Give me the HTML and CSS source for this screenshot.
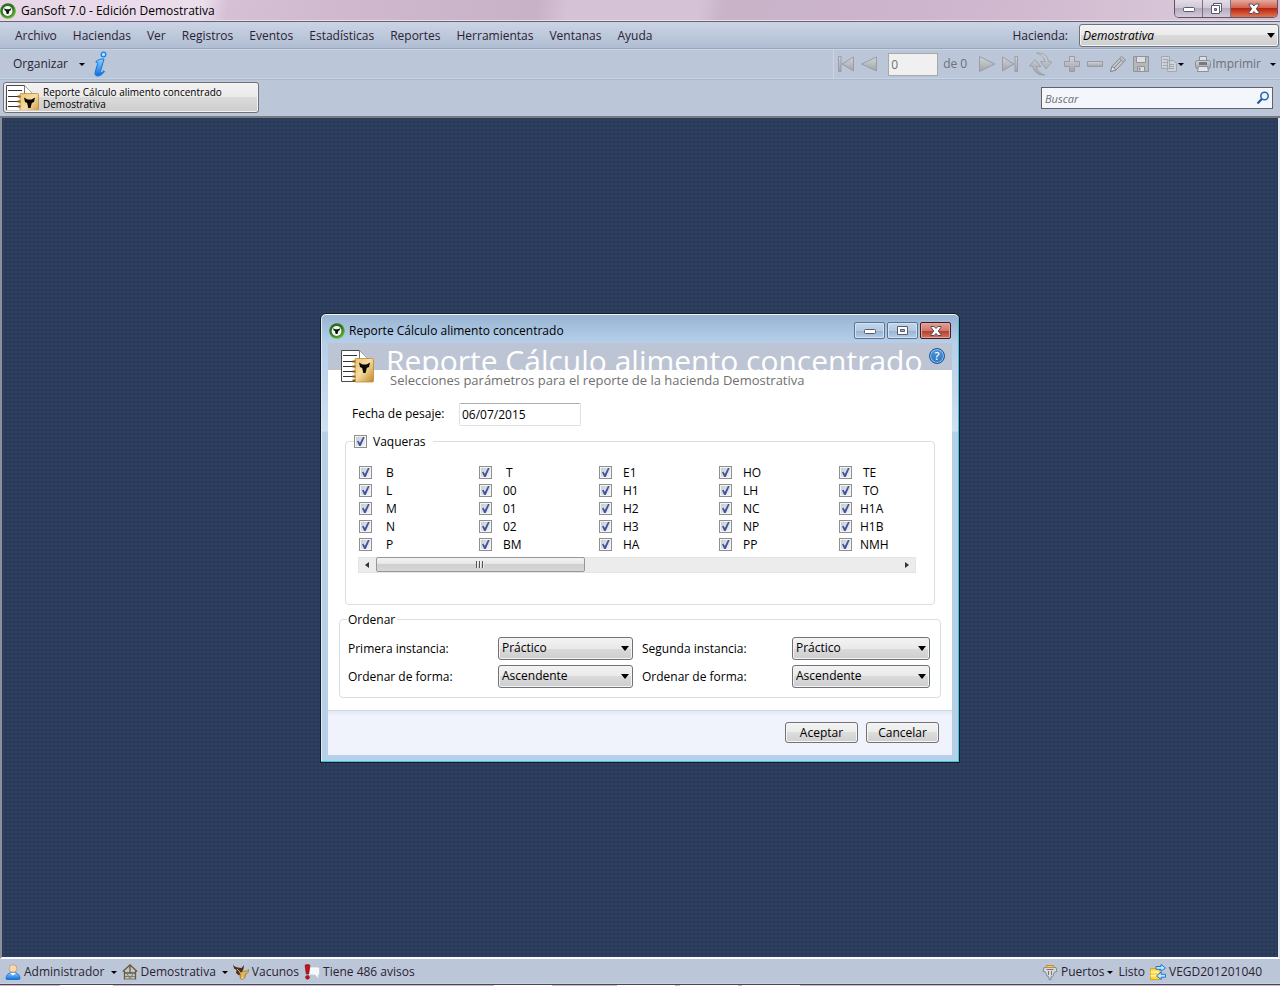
FILE: index.html
```html
<!DOCTYPE html>
<html lang="es">
<head>
<meta charset="utf-8">
<title>GanSoft 7.0 - Edición Demostrativa</title>
<link rel="stylesheet" href="styles.css">
</head>
<body>
<svg class="defs" aria-hidden="true">
  <defs>
    <linearGradient id="silver" x1="0" y1="0" x2="0" y2="1"><stop offset="0" stop-color="#d2d4d8"/><stop offset="1" stop-color="#a0a4aa"/></linearGradient>
    <linearGradient id="gold" x1="0" y1="0" x2="1" y2="1"><stop offset="0" stop-color="#e9c27a"/><stop offset=".45" stop-color="#f6dda2"/><stop offset="1" stop-color="#c1872b"/></linearGradient>
    <linearGradient id="blue" x1="0" y1="0" x2="0" y2="1"><stop offset="0" stop-color="#8fd0ff"/><stop offset="1" stop-color="#0b6be0"/></linearGradient>
    <radialGradient id="green" cx=".4" cy=".35" r=".7"><stop offset="0" stop-color="#2f5a28"/><stop offset=".6" stop-color="#2e7a1f"/><stop offset="1" stop-color="#7ec43f"/></radialGradient>
  </defs>
  <symbol id="logo" viewBox="0 0 16 16">
    <circle cx="8" cy="8" r="7.8" fill="url(#green)"/>
    <circle cx="7.600" cy="8" r="4.900" fill="#f4f7f2"/>
    <path d="M4 5.200 6.200 6.200h2.800L11.300 5.200 10.700 7.200 9.300 7.900 8.500 10.900H6.700L5.900 7.900 4.600 7.200Z" fill="#0c140a"/>
  </symbol>
  <symbol id="report" viewBox="0 0 33 33">
    <path d="M.5.5H18.500L27.500 9.500V31.500H.5Z" fill="#fff" stroke="#4a4a4a"/>
    <path d="M18.500.5V9.500H27.500" fill="#fff" stroke="#777"/>
    <path d="M2 5.500H16M2 11.500H12M2 16.500H12M2 21.500H12M2 26.500H12" stroke="#333"/>
    <rect x="14" y="8.500" width="18.500" height="23.500" rx="1" fill="url(#gold)" stroke="#c08d34" stroke-width=".8"/>
    <path d="M11.500 11.500h3M11.500 16.500h3M11.500 21.500h3M11.500 26.500h3M11.500 30.500h3" stroke="#8c5c10" stroke-width="2"/>
    <path d="M18 12.500 21.500 14.500h4l3.500-2-1 4.500-2.200 1-1.300 5h-2.200l-1.200-5L19 17Z" fill="#0b0803"/>
  </symbol>
</svg>

<header class="titlebar">
  <svg class="i16"><use href="#logo"/></svg>
  <h1 class="titlebar-text">GanSoft 7.0 - Edición Demostrativa</h1>
  <div class="caption">
    <button class="cap" aria-label="Minimizar"><svg width="14" height="8" viewBox="0 0 14 8"><rect x="1.500" y="2.500" width="11" height="4" rx="1" fill="#fff" stroke="#555b70"/></svg></button>
    <button class="cap" aria-label="Restaurar"><svg width="13" height="12" viewBox="0 0 13 12"><path d="M3.500.500h8v8h-8Z" fill="#fff" stroke="#555b70"/><path d="M1.500 2.500h8v8h-8Z" fill="#fff" stroke="#555b70"/><path d="M4.500 5.500h2v2h-2Z" fill="#aaa4b8" stroke="#555b70"/></svg></button>
    <button class="cap cap-close" aria-label="Cerrar"><svg width="14" height="12" viewBox="0 0 14 12"><path d="M2 1h3.300L7 3 8.700 1H12v1L9.300 5.800 12 9.500v1H8.700L7 8.500l-1.700 2H2v-1l2.700-3.700L2 2Z" fill="#fff" stroke="#5b4a55"/></svg></button>
  </div>
</header>

<nav class="menubar">
  <button>Archivo</button><button>Haciendas</button><button>Ver</button><button>Registros</button><button>Eventos</button><button>Estadísticas</button><button>Reportes</button><button>Herramientas</button><button>Ventanas</button><button>Ayuda</button>
  <label class="farm-label" for="farm">Hacienda:</label>
  <span class="select farm"><select id="farm"><option>Demostrativa</option></select></span>
</nav>

<div class="toolbar">
  <button class="organize">Organizar <span class="arrow"></span></button>
  <button class="info" aria-label="Información"><svg width="16" height="26" viewBox="0 0 16 26"><circle cx="10.500" cy="3.500" r="2.300" fill="#b5e2ff" stroke="#1480e8" stroke-width="1.300"/><path d="M3 10.500C5 8.500 8 7.800 11 8L7.500 20.500c-.5 1.800 1 1.500 3.300-.7l.7.700C9 24 6.500 25 4.500 25c-2 0-3-1.500-2.300-4l2.500-8.500c.4-1.500-.5-1.500-1.700-1Z" fill="url(#blue)" stroke="#1677dc"/></svg></button>
  <div class="tools">
    <button aria-label="Primero"><svg class="i18" viewBox="0 0 18 18"><path d="M1.500 1.500h2.500v15H1.500ZM16.500 2v14L5 9Z" fill="url(#silver)" stroke="#999da3"/></svg></button>
    <button aria-label="Anterior"><svg class="i18" viewBox="0 0 18 18"><path d="M16.500 2v14L1.500 9Z" fill="url(#silver)" stroke="#999da3"/></svg></button>
    <input class="page" aria-label="Registro" value="0">
    <span class="of">de 0</span>
    <button aria-label="Siguiente"><svg class="i18" viewBox="0 0 18 18"><path d="M1.500 1.500v15L17 9Z" fill="url(#silver)" stroke="#999da3"/></svg></button>
    <button aria-label="Último"><svg class="i18" viewBox="0 0 18 18"><path d="M16.500 1.500H14v15h2.500ZM1.500 2v14L13 9Z" fill="url(#silver)" stroke="#999da3"/></svg></button>
    <button class="split" aria-label="Actualizar"><svg width="24" height="24" viewBox="0 0 24 24"><path d="M7.500 1C14 .5 19 4 19.500 9.500L23 10 17 17 11.500 9.500 16 9.500C15.500 5.500 12.500 2.500 7.500 1ZM16 23C9.500 23.500 4.500 20 4 14.500L.5 14 6 7.500 12 14.500H7.500C8 18.500 11 21.500 16 23Z" fill="url(#silver)" stroke="#989ca2" stroke-width=".8"/></svg></button>
    <button class="split" aria-label="Agregar"><svg class="i18" viewBox="0 0 18 18"><path d="M6.500 1.500h5v5h5v5h-5v5h-5v-5h-5v-5h5Z" fill="url(#silver)" stroke="#999da3"/></svg></button>
    <button aria-label="Eliminar"><svg class="i18" viewBox="0 0 18 18"><rect x="1.500" y="6.500" width="15" height="5" fill="url(#silver)" stroke="#999da3"/></svg></button>
    <button aria-label="Editar"><svg class="i18" viewBox="0 0 18 18"><path d="M1.500 16.500 3 11.500 12.500 1.500 16.500 5 7 15Z" fill="#c4c7cc" stroke="#85898f"/><path d="M3 11.500 7 15 1.500 16.500Z" fill="#e2e4e7" stroke="#85898f"/><path d="M10.500 3.500l4 3.500M5 13l8-8.500" stroke="#85898f"/></svg></button>
    <button aria-label="Guardar"><svg class="i18" viewBox="0 0 18 18"><path d="M1.500 1.500h15v15h-15Z" fill="#b4b7bc" stroke="#909499"/><path d="M4.500 1.500h9v6h-9ZM5.500 11.500h7v5h-7Z" fill="#dcdee1" stroke="#909499"/><path d="M6.500 12.500h2v3h-2Z" fill="#909499"/></svg></button>
    <button class="split" aria-label="Copiar"><svg class="i18" viewBox="0 0 18 18"><path d="M1.500 1.500h8v12h-8ZM7.500 5.500h6l3 3v8h-9Z" fill="#ccd2da" stroke="#a3a8b0"/><path d="M3 4.500h5M3 7.500h4M3 10.500h4M9 9.500h5M9 11.500h5M9 13.500h5" stroke="#a3a8b0"/></svg><span class="arrow"></span></button>
    <button class="split print"><svg class="i18" viewBox="0 0 18 18"><path d="M5.500 1.500h7V6h-7Z" fill="#dde0e4" stroke="#8c9096"/><rect x="1.500" y="5.500" width="15" height="8" rx="2" fill="url(#silver)" stroke="#8c9096"/><path d="M5 7h8v3H5Z" fill="#777b81"/><path d="M4.500 11.500h9l1 5h-11Z" fill="#e3e5e8" stroke="#8c9096"/></svg>Imprimir</button>
    <button aria-label="Opciones de impresión"><span class="arrow"></span></button>
  </div>
</div>

<div class="tabrow">
  <button class="doc-tab"><svg class="tab-icon" viewBox="0 0 33 25"><use href="#report" width="33" height="33"/></svg><span>Reporte Cálculo alimento concentrado<br>Demostrativa</span></button>
  <div class="search"><input aria-label="Buscar" placeholder="Buscar"><svg width="14" height="14" viewBox="0 0 14 14"><circle cx="8.500" cy="5" r="3.700" fill="#edf7ff" stroke="#2d68b4" stroke-width="1.600"/><path d="M5.800 8 1.500 12.500" stroke="#2456a0" stroke-width="2.200"/></svg></div>
</div>

<main class="workspace">
  <section class="dialog" aria-labelledby="dlg-title">
    <div class="dlg-title">
      <svg class="i16"><use href="#logo"/></svg>
      <h2 id="dlg-title">Reporte Cálculo alimento concentrado</h2>
      <button class="win" aria-label="Minimizar"><svg width="12" height="6" viewBox="0 0 12 6"><rect x=".5" y="1.500" width="11" height="4" rx="1" fill="#fff" stroke="#555b70"/></svg></button>
      <button class="win" aria-label="Maximizar"><svg width="11" height="9" viewBox="0 0 11 9"><path d="M.5.5h10v8H.5Z" fill="#fff" stroke="#555b70"/><path d="M3.500 3.500h4v2h-4Z" fill="#9fb7d3" stroke="#555b70"/></svg></button>
      <button class="win win-close" aria-label="Cerrar"><svg width="12" height="10" viewBox="0 0 12 10"><path d="M1 .5h3L6 2.500 8 .5h3v.8L8.300 5 11 8.700v.8H8L6 7.500l-2 2H1v-.8L3.700 5 1 1.300Z" fill="#fff" stroke="#5c4650"/></svg></button>
    </div>
    <div class="dlg-body">
      <div class="dlg-head">
        <svg class="head-icon"><use href="#report"/></svg>
        <div class="head-text"><p class="head-title">Reporte Cálculo alimento concentrado</p><p class="head-sub">Selecciones parámetros para el reporte de la hacienda Demostrativa</p></div>
        <button class="help" aria-label="Ayuda">?</button>
      </div>
      <div class="date-row"><label for="date">Fecha de pesaje:</label><input id="date" value="06/07/2015"></div>
      <fieldset class="group herds">
        <legend><label><input type="checkbox" checked>Vaqueras</label></legend>
        <div class="herd-list">
          <label class="c1"><input type="checkbox" checked>B</label><label class="c1"><input type="checkbox" checked>L</label><label class="c1"><input type="checkbox" checked>M</label><label class="c1"><input type="checkbox" checked>N</label><label class="c1"><input type="checkbox" checked>P</label>
          <label class="c1"><input type="checkbox" checked>T</label><label class="c2"><input type="checkbox" checked>00</label><label class="c2"><input type="checkbox" checked>01</label><label class="c2"><input type="checkbox" checked>02</label><label class="c2"><input type="checkbox" checked>BM</label>
          <label class="c2"><input type="checkbox" checked>E1</label><label class="c2"><input type="checkbox" checked>H1</label><label class="c2"><input type="checkbox" checked>H2</label><label class="c2"><input type="checkbox" checked>H3</label><label class="c2"><input type="checkbox" checked>HA</label>
          <label class="c2"><input type="checkbox" checked>HO</label><label class="c2"><input type="checkbox" checked>LH</label><label class="c2"><input type="checkbox" checked>NC</label><label class="c2"><input type="checkbox" checked>NP</label><label class="c2"><input type="checkbox" checked>PP</label>
          <label class="c2"><input type="checkbox" checked>TE</label><label class="c2"><input type="checkbox" checked>TO</label><label class="c3"><input type="checkbox" checked>H1A</label><label class="c3"><input type="checkbox" checked>H1B</label><label class="c3"><input type="checkbox" checked>NMH</label>
        </div>
        <div class="scroll">
          <button aria-label="Desplazar a la izquierda"><span class="tri-left"></span></button>
          <div class="track"><div class="thumb"><i></i><i></i><i></i></div></div>
          <button aria-label="Desplazar a la derecha"><span class="tri-right"></span></button>
        </div>
      </fieldset>
      <fieldset class="group order">
        <legend>Ordenar</legend>
        <div class="order-grid">
          <label for="o1">Primera instancia:</label><span class="select"><select id="o1"><option>Práctico</option></select></span>
          <label for="o2">Segunda instancia:</label><span class="select"><select id="o2"><option>Práctico</option></select></span>
          <label for="o3">Ordenar de forma:</label><span class="select"><select id="o3"><option>Ascendente</option></select></span>
          <label for="o4">Ordenar de forma:</label><span class="select"><select id="o4"><option>Ascendente</option></select></span>
        </div>
      </fieldset>
      <div class="dlg-foot"><button class="btn">Aceptar</button><button class="btn">Cancelar</button></div>
    </div>
  </section>
</main>

<footer class="status">
  <button><svg class="i16" viewBox="0 0 16 16"><path d="M1 15c0-4 2.500-6.500 7-6.500s7 2.500 7 6.500c-2 1-12 1-14 0Z" fill="url(#blue)" stroke="#1265c4" stroke-width=".8"/><path d="M5 9h6L8 11.500Z" fill="#fff"/><circle cx="8" cy="4.500" r="3.900" fill="#f7d8b4" stroke="#c69263" stroke-width=".8"/></svg><span class="user">Administrador</span><span class="arrow"></span></button>
  <button><svg class="i16" viewBox="0 0 16 16"><path d="M.8 7.500 8 1l7.200 6.500M2.500 7v8.500M13.500 7v8.500M8 1v8M2.500 9h11" fill="none" stroke="#6b5a2e" stroke-width="1.300"/><path d="M3 12.500h10M3 15h10M5 9.500l3 5.500M11 9.500l-3 5.500" stroke="#80795e" fill="none"/></svg><span class="place">Demostrativa</span><span class="arrow"></span></button>
  <button><svg class="i16" viewBox="0 0 16 16"><path d="M0 .5c1.500 2.500 3.500 2.500 5 3L8.500 4 11 1 10.500 5l-2 4L6 11.500 3 9l.5-3L1 4.500Z" fill="#4f3015"/><path d="M6 8c2 1 3 0 4-1 2 1 3.500 0 6-1.500-.5 3-1.500 4-3.500 4.500L12 13.500l-3 2-2-1.500.5-3.500Z" fill="#e3b458" stroke="#8d6520" stroke-width=".7"/><path d="M4 5l3.500 3.500" stroke="#d9b77c"/><path d="M8.500 14h2" stroke="#f8e7bb"/></svg>Vacunos</button>
  <button><svg class="i16" viewBox="0 0 16 16"><path d="M5 3h9.500l1 1.500v5L14.500 11v4L11 11H5Z" fill="#f5f7fa" stroke="#c3c8d0" stroke-width=".8"/><path d="M1 1.500C1.500.3 5.500.3 6 1.500L4.700 10H2.300Z" fill="#c4121d" stroke="#7d0a10" stroke-width=".6"/><circle cx="3.500" cy="13.300" r="1.900" fill="#c4121d" stroke="#7d0a10" stroke-width=".6"/></svg>Tiene 486 avisos</button>
  <button class="ports"><svg class="i16" viewBox="0 0 16 16"><path d="M4.500 1.500h7v2h2.500l1 4-2.500.5-1.500 4-2 1v2.500H7V13l-2-1L3.500 8 1 7.500l1-4h2.500Z" fill="#d8d9da" stroke="#85888c"/><path d="M4.500 1.500h7v2h-7Z" fill="#f2c47b" stroke="#c98d34"/><path d="M4.500 5.500h7M6.500 7v4M9.500 7v4" stroke="#777"/></svg>Puertos<span class="arrow"></span></button>
  <span class="ready">Listo</span>
  <button><svg class="i16" viewBox="0 0 16 16"><path d="M.5 4.500h9v11h-9Z" fill="#ffd83d" stroke="#d79b0c" stroke-width=".8"/><path d="M.5 8h9M.5 11.700h9" stroke="#fff3ae" stroke-width="1.400"/><path d="M6 2.500h5v-2l4.500 3.500L11 7.300v-2H6ZM15.500 10.300h-4.300V8L6.500 12l4.700 3.500v-2.300h4.300Z" fill="#bfe6ff" stroke="#1467c8" stroke-width=".9"/></svg>VEGD201201040</button>
</footer>
<div class="desk-edge"></div>
</body>
</html>
```

FILE: styles.css
```css
* { box-sizing: border-box; }
body {
  margin: 0;
  min-height: 100vh;
  display: flex;
  flex-direction: column;
  background: #bbc7d8;
  font: 12px/16px "Open Sans", "Noto Sans", sans-serif;
  color: #2b2233;
}
button, input, select { font: inherit; color: inherit; margin: 0; }
button { border: 0; padding: 0; background: none; display: flex; align-items: center; }
svg { flex: none; display: block; }
h1, h2, p { margin: 0; font-size: 12px; font-weight: 400; }
.defs { width: 0; height: 0; position: absolute; }
.i16 { width: 16px; height: 16px; }
.i18 { width: 18px; height: 18px; }
.arrow { border: 3px solid transparent; border-top-color: #000; border-bottom: 0; }

.titlebar {
  height: 22px;
  display: flex;
  align-items: center;
  gap: 5px;
  border-bottom: 1px solid #685f70;
  box-shadow: inset 0 -1px #eadfea;
  background: linear-gradient(100deg, #e6d6e6 0, #ecdfec 200px, #d5c0d5 225px, #d0b9cf 340px, #c7b2c7 530px, #d6c2d6 560px, #d6c2d6 690px, #c8b3c9 715px, #cdb5cd 900px, #d3bdd2 1060px, #d9c7d8 1180px, #d2bfd2);
}
.titlebar-text { color: #000; }
.caption { margin: 0 2px 3px auto; display: flex; align-self: flex-start; border: 1px solid #5d5465; border-top: 0; border-radius: 0 0 5px 5px; overflow: hidden; }
.cap { width: 28px; height: 17px; justify-content: center; background: linear-gradient(#e5dce8, #cfc5d5 50%, #b5abc0 50%, #d4cadb); border-right: 1px solid #7b7184; }
.cap-close { width: 46px; border: 0; background: linear-gradient(#e5a99c, #cf5c48 50%, #b9250f 50%, #df7552); }

.menubar {
  height: 27px;
  padding: 1px 1px 0 15px;
  display: flex;
  align-items: center;
  gap: 16px;
  background: linear-gradient(#cad4e5, #b0bdd2);
  border-bottom: 1px solid #98a6be;
}
.farm-label { margin-left: auto; }
.select { position: relative; display: block; }
.select::after { content: ""; position: absolute; right: 4px; top: 9px; border: 4px solid transparent; border-top: 5px solid #000; border-bottom: 0; pointer-events: none; }
.select select {
  width: 100%;
  height: 23px;
  padding: 0 3px;
  appearance: none;
  border: 1px solid #6f7277;
  border-radius: 3px;
  background: linear-gradient(#f3f3f3, #e9e9e9 50%, #dadada 50%, #cecece);
  box-shadow: inset 0 0 0 1px #f4f4f4;
  color: #000;
}
.farm { width: 200px; margin-left: -5px; font-style: italic; }

.toolbar { height: 31px; display: flex; align-items: center; border-top: 1px solid #cbd6e5; border-bottom: 1px solid #a9b9cf; box-shadow: inset 0 -1px #c9d5e4; padding: 0 4px 1px 13px; }
.organize { gap: 11px; }
.info { margin-left: 8px; }
.tools { margin-left: auto; display: flex; align-items: center; gap: 5px; height: 28px; padding-left: 3px; border-left: 1px solid #cbd6e4; color: #6c7079; }
.page { width: 50px; height: 23px; padding: 0 2px; border: 1px solid #a5a8ad; background: #f0f0f0; margin-left: 5px; }
.of { margin-right: 6px; }
.split { padding-left: 5px; }
.print { margin-right: 4px; }

.tabrow { height: 38px; display: flex; align-items: center; justify-content: space-between; padding: 0 7px 1px 3px; border-bottom: 2px solid #777b80; }
.doc-tab { width: 256px; height: 31px; padding: 0 2px; gap: 4px; border: 1px solid #707276; border-radius: 3px; background: linear-gradient(#f3f3f3, #e9e9e9 50%, #dadada 50%, #cdcdcd); box-shadow: inset 0 0 0 1px #f4f4f4; color: #000; font-size: 10px; line-height: 12px; text-align: left; white-space: nowrap; }
.tab-icon { width: 33px; height: 25px; }
.search { width: 232px; height: 22px; display: flex; align-items: center; padding: 0 2px; border: 1px solid #5e636b; background: #f3f7fc; }
.search input { flex: 1; min-width: 0; padding: 3px 1px 0; border: 0; background: none; font-size: 11px; font-style: italic; }
.search input::placeholder { color: #6a6f76; opacity: 1; }

.workspace {
  flex: 1;
  display: flex;
  align-items: center;
  justify-content: center;
  border-left: 2px solid #8b919b;
  border-right: 2px solid #dfe6ee;
  border-bottom: 2px solid #f7fbff;
  background: radial-gradient(circle, #314264 0, #314264 1px, transparent 1px) 0 0 / 4px 4px, #2a3b59;
}
.dialog { width: 640px; max-width: 100%; padding: 0 7px 7px; border: 1px solid #151b28; border-radius: 6px 6px 0 0; background: linear-gradient(#96b3d1, #b5cfea 28px, #cfe0f2 117px, #b7d0ea 118px); box-shadow: inset 0 1px #f0f7fc, inset -1px -1px #35c7dc, inset 1px 0 #dcebf7; color: #000; }
.dlg-title { height: 29px; padding: 5px 1px 0 1px; display: flex; align-items: center; gap: 2px; }
.dlg-title h2 { flex: 1; padding-left: 2px; }
.win { width: 31px; height: 17px; justify-content: center; border: 1px solid #5c7391; border-radius: 2px; background: linear-gradient(#c3d6ea, #b4cae2 50%, #96b2d1 50%, #b5cee7); box-shadow: inset 0 0 0 1px #d3e2f2; }
.win-close { border-color: #4a1720; background: linear-gradient(#dfa39b, #cf796b 50%, #b43a28 50%, #cf7560); box-shadow: inset 0 0 0 1px #e2a79c; }
.dlg-body { background: #fff; display: flow-root; }
.dlg-head { height: 48px; display: flex; background: linear-gradient(#bdc5d4 27px, transparent 27px); padding: 0 7px 0 13px; }
.head-icon { width: 33px; height: 33px; margin-top: 7px; }
.head-text { flex: 1; min-width: 0; padding-left: 12px; white-space: nowrap; }
.head-title { height: 27px; overflow: hidden; font-size: 30px; line-height: 36px; color: #fff; }
.head-sub { padding-left: 4px; font-size: 13px; line-height: 20px; color: #707070; }
.help { width: 16px; height: 16px; margin: 5px 0 0 4px; justify-content: center; border: 1px solid #1c5696; border-radius: 50%; background: linear-gradient(#4e95da, #2f74c2); box-shadow: inset 0 0 0 1px #8bc2f1; color: #fff; font-size: 11px; font-weight: 600; line-height: 12px; }
.date-row { display: flex; align-items: center; padding: 12px 24px; }
.date-row label { width: 107px; }
.date-row input { width: 122px; height: 23px; padding: 0 2px; border: 1px solid #dde1e7; border-top-color: #abadb3; border-radius: 2px; }
.group { margin: 0; padding: 0; border: 1px solid #d5dfe5; border-radius: 4px; min-width: 0; }
.herds { margin: -4px 17px 0; height: 171px; }
.herds legend { margin-left: 8px; padding: 0 7px 0 0; }
label > input[type="checkbox"] { flex: none; width: 13px; height: 13px; appearance: none; border: 1px solid #8e8f8f; background: linear-gradient(135deg, #c3c8d0, #f6f6f6); box-shadow: inset 0 0 0 1px #f4f4f4; }
input[type="checkbox"]:checked::before { content: ""; display: block; width: 11px; height: 11px; background: #3f549c; clip-path: polygon(18% 48%, 32% 44%, 44% 64%, 72% 10%, 88% 10%, 52% 90%, 38% 90%); }
.herds label { display: flex; align-items: center; }
legend label { gap: 6px; }
.herd-list { margin: 14px 12px 3px 13px; display: grid; grid-template-rows: repeat(5, 18px); grid-auto-columns: 120px; grid-auto-flow: column; overflow: hidden; }
.herds .c1 { gap: 14px; }
.herds .c2 { gap: 11px; }
.herds .c3 { gap: 8px; }
.scroll { margin: 0 18px 0 12px; height: 16px; display: flex; background: #ececec; box-shadow: inset 0 0 0 1px #e4e4e4; }
.scroll button { width: 18px; justify-content: center; }
.tri-left { border: 3px solid transparent; border-right: 4px solid #333; border-left: 0; }
.tri-right { border: 3px solid transparent; border-left: 4px solid #333; border-right: 0; }
.track { flex: 1; }
.thumb { width: 40%; height: 15px; display: flex; gap: 1px; align-items: center; justify-content: center; border: 1px solid #979797; border-radius: 2px; background: linear-gradient(#f3f3f3, #e5e5e5 50%, #cfcfcf 50%, #d8d8d8); }
.thumb i { width: 2px; height: 7px; background: linear-gradient(90deg, #555 50%, #eee 50%); }
.order { margin: 7px 11px 12px; height: 86px; }
.order legend { margin-left: 7px; padding: 0 2px 0 1px; }
.order-grid { margin: 9px 10px 0 8px; display: grid; grid-template-columns: 150px 135px minmax(0, 1fr) 138px; grid-auto-rows: 23px; row-gap: 5px; align-items: center; }
.order-grid label { padding-top: 2px; }
.order-grid label:nth-child(4n + 3) { padding-left: 9px; }
.dlg-foot { height: 45px; padding: 0 13px; display: flex; align-items: center; justify-content: flex-end; gap: 8px; background: linear-gradient(#dfe9f3, #f0f3fb 5px); border-top: 1px solid #ccd9e6; }
.btn { width: 73px; height: 21px; justify-content: center; border: 1px solid #707276; border-radius: 3px; background: linear-gradient(#f3f3f3, #ebebeb 50%, #dddddd 50%, #cfcfcf); box-shadow: inset 0 0 0 1px #f6f6f6; }

.status { height: 24px; padding: 2px 18px 0 5px; display: flex; align-items: center; gap: 5px; }
.status button { gap: 3px; }
.user, .place { margin-right: 3px; }
.ports { margin-left: auto; }
.desk-edge { height: 3px; border-top: 1px solid #c6d3e2; background: linear-gradient(90deg, transparent 60px, #fff 60px 113px, transparent 113px 494px, #fff 494px 552px, transparent 552px 617px, #fff 617px 675px, transparent 675px 680px, #fff 680px 738px, transparent 738px 742px, #fff 742px 800px, transparent 800px) 0 1px no-repeat, linear-gradient(#4b4650 1px, #c9b9c9 1px); }
```
